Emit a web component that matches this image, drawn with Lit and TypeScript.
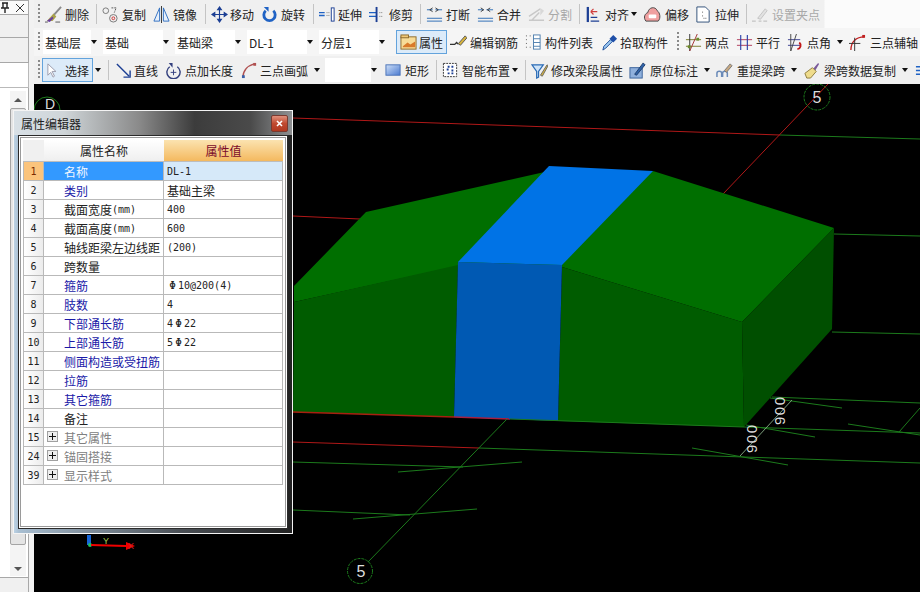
import { LitElement, css, html, svg, nothing } from "lit";
import { customElement } from "lit/decorators.js";

type Tool = {
  x: number;
  tx?: number;
  end?: number;
  icon?: string;
  text?: string;
  kind?: "sep" | "grip" | "combo" | "active" | "off";
  caret?: boolean;
  tight?: boolean;
};

const NAVY = "#1c3f94";
const BLUE = "#2f6fc0";

const icons: Record<string, unknown> = {
  brush: svg`<path d="M17 1 9 10" stroke="#8a8a8a" stroke-width="2"/><path d="M9 8l3 3-4 5H2z" fill="#a9a24a"/><path d="M2 16l6-5 1 2-4 4z" fill="#6a3fa0"/><path d="M0 17h3M11 17h5" stroke="#555"/>`,
  copy: svg`<circle cx="4" cy="5" r="3" fill="none" stroke="#777"/><circle cx="12" cy="13" r="4" fill="none" stroke="#777"/><circle cx="12" cy="13" r="1.5" fill="none" stroke="#c33"/><path d="M10 2h5l-2 5" fill="none" stroke="#555" stroke-dasharray="2 1"/>`,
  mirror: svg`<path d="M7 2v14H1zM11 2v14h6z" fill="#e8f0fa" stroke="${BLUE}"/><path d="M9 0v18" stroke="#333"/>`,
  move: svg`<path d="M9 1v16M1 9h16M9 1 7 4h4zM9 17l-2-3h4zM1 9l3-2v4zM17 9l-3-2v4z" fill="${NAVY}" stroke="${NAVY}" stroke-width="1.2"/>`,
  rotate: svg`<path d="M5 5a6 6 0 1 0 8 0" fill="none" stroke="#1f62c4" stroke-width="3"/><path d="M3 1h5v5z" fill="#1f62c4"/>`,
  extend: svg`<path d="M0 7h6M0 10h6" stroke="#1f62c4" stroke-width="1.5"/><path d="M8 7h4M8 10h4" stroke="#777" stroke-dasharray="1 1"/><rect x="13" y="2" width="3" height="14" fill="#fff" stroke="${NAVY}"/>`,
  trim: svg`<path d="M0 7h8M0 11h8" stroke="#1f62c4" stroke-width="1.5"/><path d="M8 1v16" stroke="${NAVY}" stroke-width="2"/><path d="M11 7h4M11 11h4" stroke="#777" stroke-dasharray="1 1"/>`,
  break: svg`<path d="M1 4h6M10 4h7M1 13h16M1 16h16" stroke="#2a6bb5"/><path d="M7 2 4 4l3 2M10 2l3 2-3 2" fill="none" stroke="#3a3a3a"/>`,
  merge: svg`<path d="M1 4h6M10 4h7M1 13h16M1 16h16" stroke="#2a6bb5"/><path d="M4 2l3 2-3 2M14 2l-3 2 3 2" fill="none" stroke="#3a3a3a"/>`,
  split: svg`<path d="M1 15h16M1 11l12-8M4 15l8-8" stroke="#c8c8c8" stroke-width="1.5"/><path d="M13 2l4 3-4 5z" fill="#d8d8d8"/>`,
  align: svg`<path d="M3 1v16" stroke="${NAVY}" stroke-width="2.4"/><path d="M6 16h9M6 12h7" stroke="${NAVY}" stroke-width="1.5"/><path d="M6 6h7M6 6l3-3M6 6l3 3" stroke="#d04040" stroke-width="1.3" fill="none"/>`,
  offset: svg`<path d="M2 16C-1 12 1 8 4 7 5 1 12 0 14 5c3 2 4 8 1 11z" fill="#f0a0a0" stroke="#444"/><rect x="5" y="9" width="8" height="4" rx="1" fill="#fff"/>`,
  stretch: svg`<path d="M2 1h9l4 4v12H2z" fill="#fff" stroke="#2f4f78"/><path d="M8 6v2M8 10v2M12 13h-3" stroke="#555" stroke-dasharray="1 1"/>`,
  grip: svg`<path d="M0 16h4M7 16h3M12 16h4" stroke="#b5b5b5"/><path d="M6 13 14 3l2 2-7 9z" fill="#e2e2e2" stroke="#c4c4c4"/>`,
  prop: svg`<rect x="1" y="3" width="16" height="13" fill="#f7dc98" stroke="#8c6a2c"/><rect x="1" y="1" width="8" height="3" fill="#efc878" stroke="#8c6a2c"/><path d="M3 13l5-4 3 2 5-3v6H3z" fill="#d97a2a"/>`,
  rebar: svg`<path d="M0 11h5l2-2 2 2" fill="none" stroke="#333" stroke-width="1.4"/><path d="M9 10l7-8 2 2-7 8z" fill="#d8b43c" stroke="#555"/>`,
  list: svg`<path d="M1 2h2M1 6h2M1 10h2M1 14h2M5 2h2M5 14h2" stroke="#555" stroke-dasharray="1 1"/><rect x="9" y="1" width="7" height="15" fill="#fff" stroke="#4f7fae"/><path d="M9 5h7M9 9h7M9 13h7" stroke="#4f7fae"/>`,
  pick: svg`<path d="M2 17l1-4 7-7 2 2-7 7z" fill="#9cc8f0" stroke="#1f4f9c"/><path d="M9 5l4-4 4 4-4 4z" fill="#1f4fa8"/>`,
  two: svg`<path d="M1 6h16M1 13h16" stroke="#7a7a2c"/><path d="M5 0v18" stroke="#333"/><path d="M13 0 5 18" stroke="#a03030"/><rect x="3" y="12" width="3" height="3" fill="#6a8a2c"/><rect x="12" y="4" width="3" height="3" fill="#6a8a2c"/>`,
  par: svg`<path d="M1 6h16M1 12h16" stroke="#b03a5a"/><path d="M5 1v16M12 1v16" stroke="#2a3fa8" stroke-width="1.2"/>`,
  angle: svg`<path d="M1 6h13M1 12h13" stroke="#3a3f90"/><path d="M4 0v18M10 0 4 18" stroke="#444"/><path d="M11 16a4 4 0 0 0 2-7" fill="none" stroke="#c01818" stroke-width="2"/>`,
  three: svg`<path d="M2 17C2 8 8 3 16 3" fill="none" stroke="#c02020" stroke-width="1.4"/><path d="M0 10h12M6 4v14" stroke="#333"/><rect x="14" y="1" width="3" height="3" fill="#c02020"/>`,
  select: svg`<path d="M2 2v12l3-3 2.5 5 1.5-1-2.5-5h4z" fill="#fff" stroke="#9a9aaa"/>`,
  line: svg`<path d="M2 2l13 13" stroke="${NAVY}" stroke-width="1.5"/><path d="M9 16h7V9" fill="none" stroke="${NAVY}" stroke-width="1.5"/>`,
  length: svg`<path d="M5 5a7 7 0 1 0 8 0" fill="none" stroke="#33407e" stroke-width="1.5"/><path d="M4 1h4v5z" fill="#33407e"/><path d="M6 11h6M9 8v6" stroke="#33407e"/>`,
  arc: svg`<path d="M2 17C2 9 7 4 14 2" fill="none" stroke="#b05050" stroke-width="1.5"/><rect x="1" y="14" width="3" height="3" fill="#3a5fa8"/><rect x="13" y="1" width="3" height="3" fill="#b05050"/>`,
  rect: svg`<defs><linearGradient id="rg" x1="0" y1="0" x2="1" y2="1"><stop offset="0" stop-color="#cfe0f8"/><stop offset="1" stop-color="#4a7ad0"/></linearGradient></defs><rect x="1" y="3" width="15" height="11" fill="url(#rg)" stroke="#4a72b8"/>`,
  smart: svg`<rect x="1.5" y="1.5" width="14" height="14" fill="#fff" stroke="#333" stroke-dasharray="2 1"/><path d="M6 5h2M10 5h2M5 8h2M10 9h2M6 12h2M10 12h2" stroke="#1c3f94" stroke-width="2"/>`,
  funnel: svg`<path d="M1 3h12L8 10v6l-2 1v-7z" fill="#cfe4f8" stroke="#2a6bb5" stroke-width="1.3"/><path d="M10 14l7-11 1 1-6 11z" fill="#d8b43c" stroke="#666"/>`,
  mark: svg`<rect x="1" y="6" width="13" height="11" fill="#8fb0dc" stroke="#3a639c"/><path d="M6 13 15 1l2 2-9 11z" fill="#2f62a8" stroke="#20406e"/>`,
  arch: svg`<path d="M1 16v-4c0-3 5-3 5 0v4M7 16v-4c0-3 5-3 5 0v4" fill="none" stroke="#6a8ab8" stroke-width="1.6"/><path d="M9 9l6-7 2 2-6 7z" fill="#c8a880" stroke="#777"/>`,
  sweep: svg`<path d="M11 7l5-6 1 1-4 7z" fill="#7a5a9a"/><path d="M2 12l8-6 4 4-6 7H4z" fill="#efdc8c" stroke="#8c7a3c"/>`,
  tail: svg`<path d="M1 5h8M1 9h8M1 13h8" stroke="#1f62c4" stroke-width="1.5"/>`,
};

const row1: Tool[] = [
  { x: 38, kind: "grip" },
  { x: 45, tx: 65, icon: "brush", text: "删除" },
  { x: 96, kind: "sep" },
  { x: 102, tx: 122, icon: "copy", text: "复制" },
  { x: 153, tx: 173, icon: "mirror", text: "镜像" },
  { x: 205, kind: "sep" },
  { x: 211, tx: 230, icon: "move", text: "移动" },
  { x: 261, tx: 281, icon: "rotate", text: "旋转" },
  { x: 313, kind: "sep" },
  { x: 319, tx: 338, icon: "extend", text: "延伸" },
  { x: 369, tx: 389, icon: "trim", text: "修剪" },
  { x: 420, kind: "sep" },
  { x: 426, tx: 446, icon: "break", text: "打断" },
  { x: 477, tx: 497, icon: "merge", text: "合并" },
  { x: 528, tx: 548, icon: "split", text: "分割", kind: "off" },
  { x: 579, kind: "sep" },
  { x: 585, tx: 605, icon: "align", text: "对齐", caret: true, tight: true },
  { x: 644, tx: 665, icon: "offset", text: "偏移" },
  { x: 695, tx: 715, icon: "stretch", text: "拉伸" },
  { x: 746, kind: "sep" },
  { x: 752, tx: 772, icon: "grip", text: "设置夹点", kind: "off" },
  { x: 825 },
];

const row2: Tool[] = [
  { x: 38, kind: "grip" },
  { x: 43, kind: "combo", text: "基础层" },
  { x: 103, kind: "combo", text: "基础" },
  { x: 175, kind: "combo", text: "基础梁" },
  { x: 247, kind: "combo", text: "DL-1" },
  { x: 319, kind: "combo", text: "分层1" },
  { x: 391 },
  { x: 396, tx: 419, end: 447, icon: "prop", text: "属性", kind: "active" },
  { x: 447 },
  { x: 450, tx: 470, icon: "rebar", text: "编辑钢筋" },
  { x: 525, tx: 545, icon: "list", text: "构件列表" },
  { x: 601, tx: 620, icon: "pick", text: "拾取构件" },
  { x: 677, kind: "grip" },
  { x: 685, tx: 705, icon: "two", text: "两点" },
  { x: 736, tx: 756, icon: "par", text: "平行" },
  { x: 787, tx: 807, icon: "angle", text: "点角", caret: true },
  { x: 849, tx: 870, icon: "three", text: "三点辅轴" },
  { x: 920 },
];

const row3: Tool[] = [
  { x: 38, kind: "grip" },
  { x: 42, tx: 65, end: 93, icon: "select", text: "选择", kind: "active" },
  { x: 93, caret: true, tight: true },
  { x: 108, kind: "sep" },
  { x: 115, tx: 134, icon: "line", text: "直线" },
  { x: 165, tx: 185, icon: "length", text: "点加长度" },
  { x: 241, tx: 260, icon: "arc", text: "三点画弧", caret: true },
  { x: 325, kind: "combo", text: "" },
  { x: 383 },
  { x: 385, tx: 405, icon: "rect", text: "矩形" },
  { x: 436, kind: "sep" },
  { x: 442, tx: 462, icon: "smart", text: "智能布置", caret: true, tight: true },
  { x: 525, kind: "sep" },
  { x: 531, tx: 551, icon: "funnel", text: "修改梁段属性" },
  { x: 629, tx: 650, icon: "mark", text: "原位标注", caret: true },
  { x: 716, tx: 737, icon: "arch", text: "重提梁跨", caret: true },
  { x: 803, tx: 824, icon: "sweep", text: "梁跨数据复制", caret: true },
  { x: 915, tx: 935, icon: "tail", text: "" },
  { x: 920 },
];

type Row = { n: number; name: string; unit?: string; value?: string; tone?: "blue" | "grey"; plus?: boolean; cjk?: boolean };

const rows: Row[] = [
  { n: 1, name: "名称", value: "DL-1" },
  { n: 2, name: "类别", value: "基础主梁", tone: "blue", cjk: true },
  { n: 3, name: "截面宽度", unit: "(mm)", value: "400" },
  { n: 4, name: "截面高度", unit: "(mm)", value: "600" },
  { n: 5, name: "轴线距梁左边线距", value: "(200)" },
  { n: 6, name: "跨数量" },
  { n: 7, name: "箍筋", value: " Φ10@200(4)", tone: "blue" },
  { n: 8, name: "肢数", value: "4", tone: "blue" },
  { n: 9, name: "下部通长筋", value: "4Φ22", tone: "blue" },
  { n: 10, name: "上部通长筋", value: "5Φ22", tone: "blue" },
  { n: 11, name: "侧面构造或受扭筋", tone: "blue" },
  { n: 12, name: "拉筋", tone: "blue" },
  { n: 13, name: "其它箍筋", tone: "blue" },
  { n: 14, name: "备注" },
  { n: 15, name: "其它属性", tone: "grey", plus: true },
  { n: 24, name: "锚固搭接", tone: "grey", plus: true },
  { n: 39, name: "显示样式", tone: "grey", plus: true },
];

const line = (a: number[], c: string, w = 1) =>
  svg`<line x1=${a[0]} y1=${a[1]} x2=${a[2]} y2=${a[3]} stroke=${c} stroke-width=${w} />`;

const RED = "#b01818";
const GRN = "#1c7a1c";

// the rebar sign sits wider than the mono digits around it
const renderValue = (value: string) => {
  const [before, after] = value.split("Φ");
  return after === undefined
    ? value
    : html`${before}<span class="sign">Φ</span>${after}`;
};

@customElement("app-root")
export class AppRoot extends LitElement {
  static styles = css`
    :host {
      display: block;
      width: 920px;
      height: 592px;
      overflow: hidden;
      position: relative;
      font-family: "Noto Sans CJK SC", "Liberation Sans", sans-serif;
      font-size: 12px;
      color: #222;
      background: #f0f0f0;
    }
    .app {
      display: flex;
      height: 100%;
    }
    .dock {
      width: 34px;
      flex: none;
      display: flex;
      flex-direction: column;
      background: #f2f2f2;
    }
    .dock-tab {
      width: 29px;
      height: 15px;
      box-sizing: border-box;
      border: 1px solid #a8a8a8;
      border-left: none;
      background: #fafafa;
      display: flex;
      align-items: center;
      justify-content: space-between;
      padding: 0 4px 0 1px;
    }
    .dock-row {
      width: 29px;
      box-sizing: border-box;
      border-bottom: 1px solid #a8a8a8;
      border-right: 1px solid #a8a8a8;
      background: #f0f0f0;
    }
    .dock-row.a { height: 23px; }
    .dock-row.b { height: 25px; }
    .dock-row.c { height: 25px; background: #fff; }
    .dock-body {
      flex: 1;
      width: 29px;
      box-sizing: border-box;
      background: #fff;
      border-right: 1px solid #a8a8a8;
      padding: 3px 2px 0 10px;
    }
    .scroll {
      height: 485px;
      background: #f4f4f4;
      display: flex;
      flex-direction: column;
      align-items: center;
      padding: 7px 0 5px;
      box-sizing: border-box;
    }
    .thumb {
      flex: 1;
      align-self: stretch;
      margin: 6px 0 22px;
      background: #e4e4e4;
      border: 1px solid #a4a4a4;
      border-radius: 2px;
    }
    .arrow-up {
      border: 4px solid transparent;
      border-top: none;
      border-bottom: 4px solid #555;
    }
    .arrow-down {
      border: 4px solid transparent;
      border-bottom: none;
      border-top: 4px solid #555;
    }
    .dock-foot {
      height: 15px;
      width: 29px;
      box-sizing: border-box;
      background: #f0f0f0;
      border-top: 1px solid #a8a8a8;
      border-right: 1px solid #a8a8a8;
    }
    .main {
      flex: 1;
      display: flex;
      flex-direction: column;
      min-width: 0;
    }
    .bar {
      height: 28px;
      flex: none;
      display: flex;
      align-items: center;
      padding-left: 4px;
      background: #f5f5f5;
      white-space: nowrap;
    }
    .bar.first {
      background: linear-gradient(to right, #f0f0f0 790px, #fbfbfb 791px);
    }
    .bar.last {
      background: #f0f0f0;
    }
    .item {
      flex: none;
      height: 100%;
      display: flex;
      align-items: center;
      box-sizing: border-box;
      overflow: visible;
    }
    .item.off {
      color: #a8a8a8;
    }
    .item.active {
      height: 24px;
      background: #dcebf9;
      border: 1px solid #63a3dc;
      padding-left: 3px;
    }
    .slot {
      flex: none;
      display: flex;
    }
    .slot svg {
      display: block;
    }
    .caret {
      flex: none;
      width: 0;
      height: 0;
      margin-left: 6px;
      border: 3px solid transparent;
      border-bottom: none;
      border-top: 4px solid #111;
    }
    .caret.tight {
      margin-left: 2px;
    }
    .sep {
      width: 1px;
      height: 20px;
      background: #c4c4c4;
    }
    .grip {
      width: 2px;
      height: 20px;
      background: repeating-linear-gradient(to bottom, #8a8a8a 0 2px, transparent 2px 4px);
    }
    .combo {
      flex: none;
      height: 24px;
      display: flex;
      align-items: center;
      padding-left: 2px;
      background: #fff;
      width: calc(100% - 12px);
      box-sizing: border-box;
      position: relative;
    }
    .combo .caret {
      position: absolute;
      right: -6px;
      top: 10px;
      margin: 0;
    }
    .canvas {
      flex: 1;
      background: #000;
      overflow: hidden;
    }
    .canvas svg {
      display: block;
    }
    .dialog {
      position: absolute;
      left: 13px;
      top: 110px;
      width: 280px;
      height: 424px;
      box-sizing: border-box;
      border: 1px solid #f4f4f4;
      background: linear-gradient(to right, #bcd2e4 0, #a9bfd2 5px, #4a4f55 60%, #222 100%);
      display: flex;
      flex-direction: column;
      padding: 0 4px 4px;
    }
    .title {
      height: 24px;
      flex: none;
      display: flex;
      align-items: center;
      justify-content: space-between;
      margin: 0 -4px;
      padding: 0 4px 0 7px;
      background: linear-gradient(to right, #d8e0e6 0, #cfd5d8 18%, #8a8a8a 45%, #3c3c3c 65%, #4a4a4a 85%, #8e9092 100%);
      color: #222;
    }
    .close {
      width: 17px;
      height: 17px;
      box-sizing: border-box;
      background: linear-gradient(to bottom, #e0907c, #c04a30 50%, #b03820);
      border: 1px solid #7a3a30;
      border-radius: 2px;
      display: flex;
      align-items: center;
      justify-content: center;
    }
    .client {
      flex: 1;
      background: #fff;
      border: 1px solid #2a2a2a;
      box-shadow: inset 0 0 0 1px #fff, inset 0 0 0 2px #9a9a9a;
      padding: 4px 4px 0;
    }
    .grid {
      display: grid;
      grid-template-columns: 21px 120px 119px;
    }
    .h {
      height: 22px;
      box-sizing: border-box;
      display: flex;
      align-items: center;
      justify-content: center;
      border-bottom: 1px solid #bdbdbd;
      background: linear-gradient(to bottom, #fff, #efefef);
    }
    .h.value {
      background: linear-gradient(to bottom, #fbe3b0, #f4b95f);
      color: #7a0a2a;
    }
    .h.corner {
      background: #f0f0f0;
    }
    .c {
      height: 19px;
      box-sizing: border-box;
      display: flex;
      align-items: center;
      white-space: nowrap;
      border-bottom: 1px solid #b9b9b9;
      border-right: 1px solid #b9b9b9;
    }
    .c.idx {
      justify-content: center;
      font-family: "DejaVu Sans Mono", monospace;
      font-size: 10px;
      border-left: 1px solid #b9b9b9;
      background: linear-gradient(to right, #fff, #ececec);
    }
    .c.idx.on {
      background: #fbc47c;
      color: #7a2a00;
    }
    .c.name {
      padding-left: 20px;
      position: relative;
    }
    .c.name.blue { color: #1a1aa8; }
    .c.name.grey { color: #808080; }
    .c.name.on {
      background: #3399ff;
      color: #f0f6ff;
    }
    .unit {
      font-family: "DejaVu Sans Mono", monospace;
      font-size: 10px;
    }
    .c.value {
      padding-left: 3px;
      white-space: pre;
      font-family: "DejaVu Sans Mono", monospace;
      font-size: 10px;
    }
    .c.value.cjk {
      font-family: "Noto Sans CJK SC", sans-serif;
      font-size: 12px;
    }
    .c.value.on {
      background: #d6e9f9;
    }
    .sign {
      display: inline-block;
      width: 11px;
      text-align: center;
      font-size: 11px;
    }
    .plus {
      position: absolute;
      left: 3px;
      top: 3px;
      width: 11px;
      height: 11px;
      box-sizing: border-box;
      border: 1px solid #a0a0a0;
      background: #eee;
      display: flex;
      align-items: center;
      justify-content: center;
    }
  `;

  private renderTool(t: Tool, next: Tool | undefined) {
    const width = next ? next.x - t.x : 0;
    const caret = t.caret
      ? html`<span class="caret ${t.tight ? "tight" : ""}"></span>`
      : nothing;
    if (t.kind === "sep") {
      return html`<div class="item" style="width:${width}px"><div class="sep"></div></div>`;
    }
    if (t.kind === "grip") {
      return html`<div class="item" style="width:${width}px"><div class="grip"></div></div>`;
    }
    if (t.kind === "combo") {
      return html`<div class="item" style="width:${width}px">
        <div class="combo">${t.text}<span class="caret"></span></div>
      </div>`;
    }
    if (!t.icon) {
      return html`<div class="item" style="width:${width}px">${caret}</div>`;
    }
    const active = t.kind === "active";
    const boxWidth = active && t.end ? t.end - t.x : width;
    const slot = (t.tx ?? t.x) - t.x - (active ? 4 : 0);
    return html`<div class="item ${t.kind ?? ""}" style="width:${boxWidth}px">
      <span class="slot" style="width:${slot}px">
        <svg width="17" height="17" viewBox="0 0 18 18">${icons[t.icon]}</svg>
      </span>
      ${t.text}${caret}
    </div>`;
  }

  private renderBar(tools: Tool[], cls: string) {
    return html`<div class="bar ${cls}">
      ${tools.slice(0, -1).map((t, i) => this.renderTool(t, tools[i + 1]))}
    </div>`;
  }

  private renderScene() {
    // page coordinates, the viewBox takes off the dock and the toolbars
    return html`<svg width="886" height="508" viewBox="34 84 886 508">
      <circle cx="47" cy="110" r="13" fill="none" stroke=${GRN} />
      <text x="45" y="109" fill="#ddd" font-size="14" font-family="Liberation Sans">D</text>

      ${line([293, 118, 780, 135], RED)} ${line([780, 135, 920, 139], GRN)}
      ${line([828, 84, 723, 194], RED)} ${line([293, 216, 360, 219], RED)}
      ${line([834, 234, 920, 236], GRN)} ${line([832, 332, 920, 334], GRN)}

      <polygon points="294,286 366,212 549,171 562,267 458,266 294,302" fill="#006f00" />
      <polygon points="653,171 834,228 742,322 562,267 458,266" fill="#006f00" />
      <polygon points="294,302 458,265 454,417 293,412" fill="#005c00" />
      <polygon points="562,267 742,322 744,427 558,421" fill="#005c00" />
      <polygon points="742,322 834,228 832,329 744,427" fill="#004f00" />
      <polygon points="549,166 653,171 562,265 458,262" fill="#0073e6" />
      <polygon points="458,262 562,265 558,421 454,417" fill="#0059b3" />

      ${line([293, 412, 454, 417], "#a82010", 1.4)} ${line([454, 417, 510, 419], "#a82040", 1.4)}
      ${line([510, 419, 744, 427], GRN)}
      ${line([293, 442, 479, 448], RED)} ${line([479, 448, 920, 463], GRN)}
      ${line([293, 462, 463, 467], GRN)} ${line([398, 472, 522, 462], GRN)}
      ${line([293, 510, 410, 515], GRN)} ${line([353, 519, 477, 509], GRN)}
      ${line([507, 419, 368, 562], GRN)}
      ${line([772, 397, 920, 403], GRN)} ${line([770, 398, 842, 408], GRN)}
      ${line([746, 425, 815, 437], GRN)} ${line([744, 427, 920, 433], GRN)}
      ${line([848, 424, 920, 435], GRN)} ${line([899, 432, 920, 408], GRN)}
      ${line([692, 448, 788, 465], GRN)} ${line([740, 456, 792, 400], "#7a9a7a")}

      <circle cx="817" cy="97" r="13" fill="none" stroke=${GRN} stroke-dasharray="3 1" />
      <text x="817" y="103" fill="#ddd" font-size="16" text-anchor="middle" font-family="Liberation Sans">5</text>
      <circle cx="360" cy="571" r="12.5" fill="none" stroke=${GRN} stroke-dasharray="3 1" />
      <text x="361" y="577" fill="#ddd" font-size="16" text-anchor="middle" font-family="Liberation Sans">5</text>

      <text transform="translate(757 453) rotate(-90)" fill="#ddd" font-size="15" letter-spacing="1.5" font-family="Liberation Sans">900</text>
      <text transform="translate(785 425) rotate(-90)" fill="#ddd" font-size="15" letter-spacing="1.5" font-family="Liberation Sans">900</text>

      <rect x="87" y="535" width="4" height="10" fill="#1565d8" />
      <circle cx="90" cy="545" r="2" fill="#20c060" />
      <path d="M91 544l35 1v-3l9 4-9 4v-3l-35-1z" fill="#f00000" />
      <text x="103" y="544" fill="#a8c850" font-size="9" font-family="Liberation Sans">Y</text>
      <text x="128" y="549" fill="#d02020" font-size="9" font-family="Liberation Sans">X</text>
    </svg>`;
  }

  private renderDialog() {
    return html`<div class="dialog">
      <div class="title">
        <span>属性编辑器</span>
        <span class="close">
          <svg width="7" height="7" viewBox="0 0 7 7"><path d="M1 1l5 5M6 1 1 6" stroke="#fff" stroke-width="1.6" /></svg>
        </span>
      </div>
      <div class="client">
        <div class="grid">
          <div class="h corner"></div>
          <div class="h">属性名称</div>
          <div class="h value">属性值</div>
          ${rows.map((r) => {
            const on = r.n === 1 ? "on" : "";
            return html`<div class="c idx ${on}">${r.n}</div>
              <div class="c name ${r.tone ?? ""} ${on}">
                ${r.plus
                  ? html`<span class="plus">
                      <svg width="9" height="9" viewBox="0 0 9 9"><path d="M1 4.5h7M4.5 1v7" stroke="#111" /></svg>
                    </span>`
                  : nothing}${r.name}${r.unit ? html`<span class="unit">${r.unit}</span>` : nothing}
              </div>
              <div class="c value ${on} ${r.cjk ? "cjk" : ""}">${renderValue(r.value ?? "")}</div>`;
          })}
        </div>
      </div>
    </div>`;
  }

  render() {
    return html`<div class="app">
        <div class="dock">
          <div class="dock-tab">
            <svg width="8" height="11" viewBox="0 0 8 11"><path d="M1 1h6M2 1v5h4V1M0 6h8M4 6v5" fill="none" stroke="#222" stroke-width="1.4" /></svg>
            <svg width="8" height="8" viewBox="0 0 8 8"><path d="M0 0l8 8M8 0 0 8" stroke="#333" /></svg>
          </div>
          <div class="dock-row a"></div>
          <div class="dock-row b"></div>
          <div class="dock-row c"></div>
          <div class="dock-body">
            <div class="scroll">
              <span class="arrow-up"></span>
              <span class="thumb"></span>
              <span class="arrow-down"></span>
            </div>
          </div>
          <div class="dock-foot"></div>
        </div>
        <div class="main">
          ${this.renderBar(row1, "first")} ${this.renderBar(row2, "")} ${this.renderBar(row3, "last")}
          <div class="canvas">${this.renderScene()}</div>
        </div>
      </div>
      ${this.renderDialog()}`;
  }
}
